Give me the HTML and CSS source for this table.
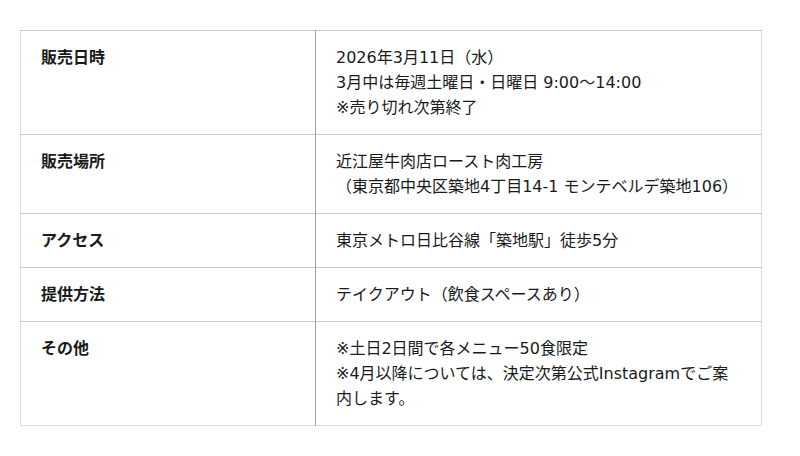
FILE: index.html
```html
<!DOCTYPE html>
<html lang="ja">
<head>
<meta charset="utf-8">
<link rel="stylesheet" href="styles.css">
</head>
<body>
<table class="info">
  <tr>
    <th>販売日時</th>
    <td>2026年3月11日（水）<br>3月中は毎週土曜日・日曜日 9:00〜14:00<br>※売り切れ次第終了</td>
  </tr>
  <tr>
    <th>販売場所</th>
    <td>近江屋牛肉店ロースト肉工房<br>（東京都中央区築地4丁目14-1 モンテベルデ築地106）</td>
  </tr>
  <tr>
    <th>アクセス</th>
    <td>東京メトロ日比谷線「築地駅」徒歩5分</td>
  </tr>
  <tr>
    <th>提供方法</th>
    <td>テイクアウト（飲食スペースあり）</td>
  </tr>
  <tr>
    <th>その他</th>
    <td>※土日2日間で各メニュー50食限定<br>※4月以降については、決定次第公式Instagramでご案内します。</td>
  </tr>
</table>
</body>
</html>
```
FILE: styles.css
```css
html, body {
  margin: 0;
  padding: 0;
  background: #fff;
}
body {
  padding: 30px 0 0 20px;
  font-family: "DejaVu Sans", "Noto Sans CJK JP", sans-serif;
  font-size: 16px;
  line-height: 25px;
  color: #1a1a1a;
}
.info {
  width: 742px;
  border-collapse: collapse;
  border: 1px solid #ddd;
}
.info th,
.info td {
  padding: 14px 20px;
  text-align: left;
  vertical-align: top;
  border-top: 1px solid #c8c8c8;
}
.info th {
  width: 254px;
  font-weight: bold;
  border-right: 1px solid #a0a0a0;
}
.info td {
  font-weight: normal;
}
```
